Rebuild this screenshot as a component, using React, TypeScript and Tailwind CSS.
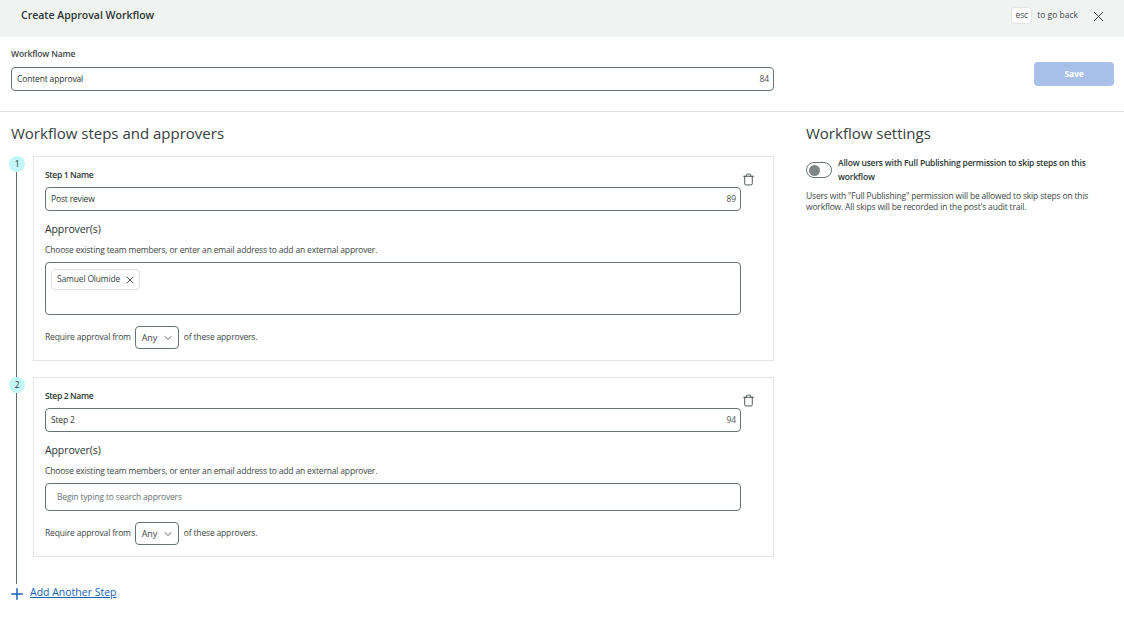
import { ChevronDown, Plus, Trash, X } from 'lucide-react';

const font = 'font-["Open_Sans","Noto_Sans",sans-serif]';

function NameField({ value, count }: { value: string; count: number }) {
  return (
    <div className="flex h-[24px] items-center justify-between rounded-[4px] border border-[#6a7474] pl-[5px] pr-[4px] text-[8.5px] text-[#2c3636]">
      <span>{value}</span>
      <span className="text-[#4c5656]">{count}</span>
    </div>
  );
}

function RequireRow() {
  return (
    <div className="flex items-center text-[8.5px] text-[#3d4747]">
      <span>Require approval from</span>
      <div className="ml-[4px] mr-[5px] flex h-[23px] w-[44px] items-center justify-between rounded-[4px] border border-[#6a7474] pl-[6px] pr-[4px] text-[9px]">
        <span>Any</span>
        <ChevronDown size={12} strokeWidth={1.75} />
      </div>
      <span>of these approvers.</span>
    </div>
  );
}

function StepCard({
  number,
  name,
  value,
  count,
  last,
  children,
}: {
  number: number;
  name: string;
  value: string;
  count: number;
  last?: boolean;
  children: React.ReactNode;
}) {
  return (
    <div className="flex">
      <div className="mr-[8px] flex w-[16px] flex-col items-center">
        <div className="flex h-[16px] w-[16px] shrink-0 items-center justify-center rounded-full bg-[#c3f7f7] text-[8.5px] text-[#2c3636]">
          {number}
        </div>
        <div className="-ml-px w-px flex-1 bg-[#5f6b6b]" />
      </div>
      <div className={`flex-1 ${last ? 'pb-[27px]' : 'pb-[16px]'}`}>
        <div className="relative border border-[#e3e5e5] pl-[11px] pr-[32px] pt-[11px]">
          <Trash size={13} strokeWidth={1.5} className="absolute right-[18px] top-[16px] text-[#2c3636]" />
          <div className="mb-[5px] text-[8.5px] font-semibold leading-[14px] tracking-[-0.35px] text-[#2c3636]">
            {name}
          </div>
          <NameField value={value} count={count} />
          <div className="mt-[10px] text-[10.5px] font-medium leading-[16px] tracking-[-0.1px] text-[#2c3636]">
            Approver(s)
          </div>
          <div className="mt-[7px] text-[8.5px] leading-[12px] text-[#3d4747]">
            Choose existing team members, or enter an email address to add an external approver.
          </div>
          {children}
        </div>
      </div>
    </div>
  );
}

export default function App() {
  return (
    <div className={`h-[617px] w-[1124px] overflow-hidden bg-white tracking-[-0.17px] ${font}`}>
      <div className="flex h-[37px] items-start justify-between bg-[#f1f3f3] pl-[21px] pr-[17px] pt-[7px]">
        <h1 className="text-[10.5px] font-semibold leading-[16px] tracking-normal text-[#2c3636]">
          Create Approval Workflow
        </h1>
        <div className="-mt-[1px] flex items-center text-[8.5px] text-[#3d4747]">
          <span className="flex h-[15px] w-[19px] items-center justify-center rounded-[3px] bg-white text-[8.5px] shadow-[0_0_2px_rgba(0,0,0,0.2)]">
            esc
          </span>
          <span className="ml-[6px] tracking-normal">to go back</span>
          <X size={17} strokeWidth={1.4} className="ml-[12px] mt-[2px] text-[#3d4747]" />
        </div>
      </div>

      <div className="flex h-[75px] border-b border-[#dfe1e1] pl-[11px] pr-[10px]">
        <div className="w-[763px] pt-[10px]">
          <div className="mb-[6px] text-[8.5px] font-semibold leading-[14px] tracking-[-0.15px] text-[#3d4747]">
            Workflow Name
          </div>
          <NameField value="Content approval" count={84} />
        </div>
        <button className="ml-auto mt-[25px] h-[24px] w-[80px] rounded-[4px] bg-[#a8bfe8] text-[8.5px] font-bold text-white">
          Save
        </button>
      </div>

      <div className="flex pl-[9px] pt-[10px]">
        <div className="w-[765px]">
          <h2 className="mb-[12px] ml-[2px] text-[15px] leading-[22px] tracking-normal text-[#364040]">
            Workflow steps and approvers
          </h2>
          <StepCard number={1} name="Step 1 Name" value="Post review" count={89}>
            <div className="mb-[11px] mt-[6px] flex h-[53px] items-start rounded-[4px] border border-[#6a7474] pl-[5px] pt-[6px]">
              <span className="flex h-[21px] items-center rounded-[4px] border border-[#dfe1e1] pl-[5px] pr-[3px] text-[8.5px] text-[#3d4747]">
                Samuel Olumide
                <X size={12} strokeWidth={1.9} className="ml-[4px]" />
              </span>
            </div>
            <div className="pb-[11px]">
              <RequireRow />
            </div>
          </StepCard>
          <StepCard number={2} name="Step 2 Name" value="Step 2" count={94} last>
            <div className="mb-[11px] mt-[6px] flex h-[28px] items-center rounded-[4px] border border-[#6a7474] pl-[11px] text-[8.5px] text-[#6a7474]">
              Begin typing to search approvers
            </div>
            <div className="pb-[11px]">
              <RequireRow />
            </div>
          </StepCard>
          <div className="-ml-[1px] -mt-[1px] flex items-center text-[#155fb5]">
            <Plus size={18} strokeWidth={2} className="mt-[2px]" />
            <a className="ml-[4px] text-[10.5px] font-medium tracking-normal underline">Add Another Step</a>
          </div>
        </div>

        <div className="ml-[32px] w-[296px]">
          <h2 className="mb-[12px] text-[15px] leading-[22px] tracking-normal text-[#364040]">Workflow settings</h2>
          <div className="flex items-start">
            <div className="mt-[6px] flex h-[16px] w-[26px] shrink-0 items-center rounded-full border border-[#6a7474] pl-[2px]">
              <div className="h-[11px] w-[11px] rounded-full bg-[#7f8686]" />
            </div>
            <div className="ml-[6px] text-[8.5px] font-semibold leading-[14px] tracking-[-0.2px] text-[#2c3636]">
              Allow users with Full Publishing permission to skip steps on this workflow
            </div>
          </div>
          <p className="mt-[6px] text-[8.5px] leading-[11px] text-[#3d4747]">
            Users with "Full Publishing" permission will be allowed to skip steps on this workflow. All skips will be
            recorded in the post's audit trail.
          </p>
        </div>
      </div>
    </div>
  );
}
